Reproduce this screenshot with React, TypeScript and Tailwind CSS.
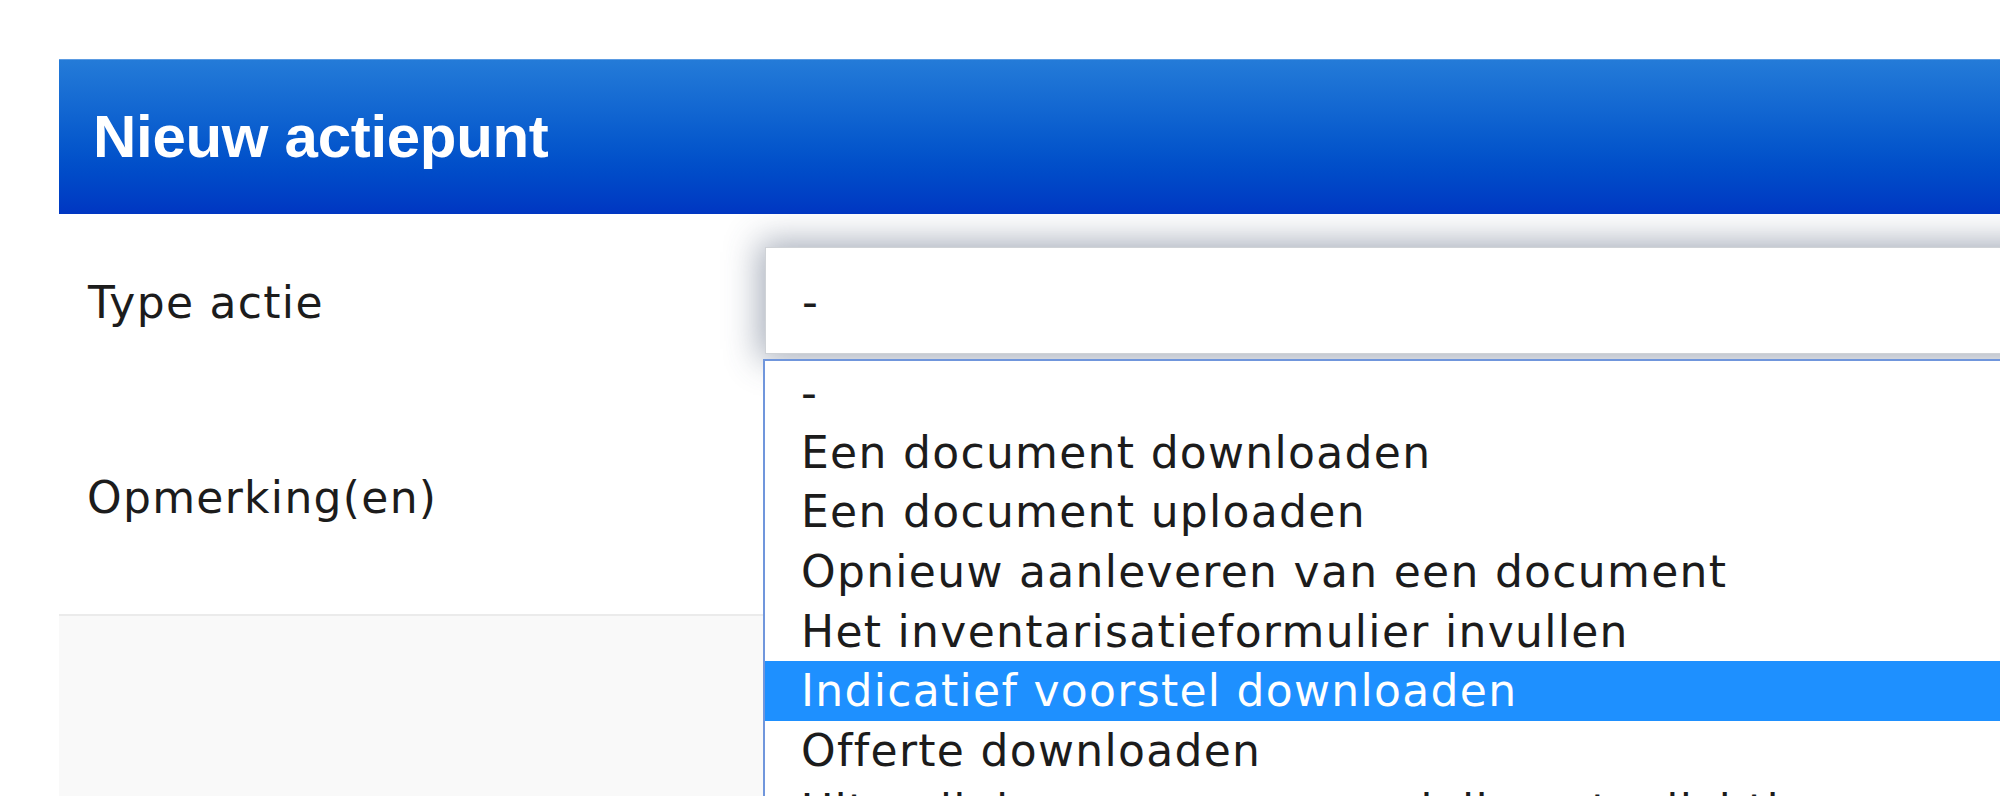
import React from 'react';

const opties = [
  '-',
  'Een document downloaden',
  'Een document uploaden',
  'Opnieuw aanleveren van een document',
  'Het inventarisatieformulier invullen',
  'Indicatief voorstel downloaden',
  'Offerte downloaden',
  'Uitnodiging voor een mondelinge toelichting',
];

const GESELECTEERD = 5;

export default function App() {
  return (
    <div className="relative h-[796px] w-[2000px] overflow-hidden bg-white font-['DejaVu_Sans',sans-serif] text-[#1c1c1c]">
      <div className="ml-[59px] mt-[59px] w-[2000px]">
        {/* kop */}
        <div className="relative z-10 flex h-[155px] items-center border-t border-[#5b9be2] bg-linear-to-b from-[#247bd8] to-[#0036c2] pl-[34px]">
          <h1 className="font-['Liberation_Sans',Arial,sans-serif] text-[60px] font-bold tracking-[-0.3px] text-white">
            Nieuw actiepunt
          </h1>
        </div>

        {/* formulier */}
        <div className="bg-white pt-[33px] text-[44px] tracking-[1.3px]">
          <div className="flex h-[107px] items-center">
            <label className="w-[706px] shrink-0 pl-[29px] pt-[5px]">Type actie</label>
            <div className="relative h-full flex-1">
              <div className="flex h-full items-center border border-[#cfd2d6] bg-white pl-[36px] pt-[3px] shadow-[0_0_32px_6px_rgba(60,75,105,0.45)]">
                -
              </div>

              {/* open keuzelijst */}
              <div className="absolute left-[-2px] top-[112px] z-20 w-[1300px] border-2 border-[#7096dc] bg-white pt-[2px]">
                {opties.map((o, i) => (
                  <div
                    key={o}
                    className={
                      i === GESELECTEERD
                        ? 'h-[59.7px] whitespace-nowrap bg-[#1e90ff] pl-[36px] leading-[59.7px] text-white'
                        : 'h-[59.7px] whitespace-nowrap pl-[36px] leading-[59.7px]'
                    }
                  >
                    {o}
                  </div>
                ))}
              </div>
            </div>
          </div>

          <div className="pb-[87px] pt-[114px]">
            <label className="block pl-[28px] leading-[59px]">Opmerking(en)</label>
          </div>
        </div>

        {/* voet */}
        <div className="h-[200px] border-t-2 border-[#ebebeb] bg-[#f9f9f9]" />
      </div>
    </div>
  );
}
